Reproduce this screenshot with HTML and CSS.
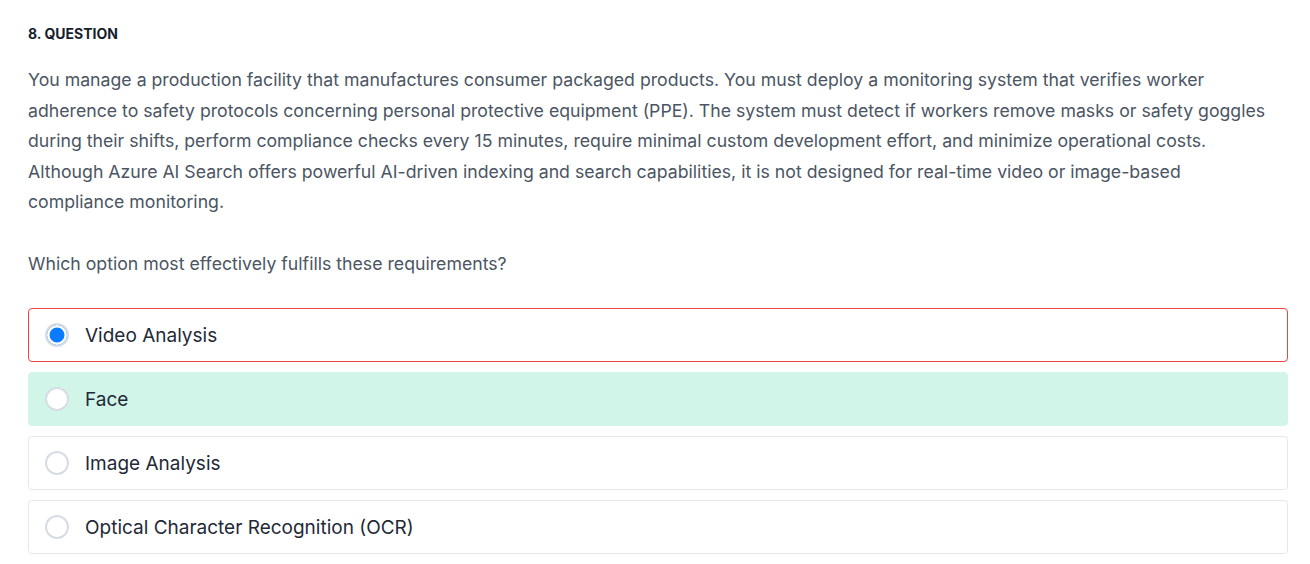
FILE: index.html
```html
<!DOCTYPE html>
<html lang="en">
<head>
<meta charset="utf-8">
<link rel="stylesheet" href="styles.css">
</head>
<body>
<main class="question">
  <h2 class="q-title">8. QUESTION</h2>
  <p class="q-text">You manage a production facility that manufactures consumer packaged products. You must deploy a monitoring system that verifies worker adherence to safety protocols concerning personal protective equipment (PPE). The system must detect if workers remove masks or safety goggles during their shifts, perform compliance checks every 15 minutes, require minimal custom development effort, and minimize operational costs. Although Azure AI Search offers powerful AI-driven indexing and search capabilities, it is not designed for real-time video or image-based compliance monitoring.</p>
  <p class="q-text q-ask">Which option most effectively fulfills these requirements?</p>
  <div class="options">
    <label class="option option-wrong"><span class="radio radio-on"></span><span class="opt-text">Video Analysis</span></label>
    <label class="option option-correct"><span class="radio"></span><span class="opt-text">Face</span></label>
    <label class="option"><span class="radio"></span><span class="opt-text">Image Analysis</span></label>
    <label class="option"><span class="radio"></span><span class="opt-text">Optical Character Recognition (OCR)</span></label>
  </div>
</main>
</body>
</html>
```
FILE: styles.css
```css
* { box-sizing: border-box; }
html, body { margin: 0; background: #ffffff; }
body { font-family: Inter, "Noto Sans", sans-serif; }
.question { padding: 21px 22px 0 28px; }
.q-title {
  margin: 0;
  font-size: 14px;
  font-weight: 700;
  line-height: 26px;
  color: #161e2e;
}
.q-text {
  margin: 18px 0 0 0;
  font-size: 17.7px;
  line-height: 30.5px;
  color: #4b5563;
  padding-right: 10px;
}
.q-ask { margin-top: 31px; }
.options {
  margin-top: 29px;
  display: flex;
  flex-direction: column;
  gap: 10px;
}
.option {
  display: flex;
  align-items: center;
  height: 54px;
  padding-left: 16px;
  border: 1px solid #e5e7eb;
  border-radius: 4px;
  background: #fff;
}
.option-wrong { border-color: #ef4444; }
.option-correct { background: #d1f5e8; border-color: #d1f5e8; }
.radio {
  width: 24px;
  height: 24px;
  border-radius: 50%;
  border: 2px solid #d8dce5;
  background: #fff;
  flex: none;
}
.radio-on {
  background: #0a7cff;
  box-shadow: inset 0 0 0 2.5px #fff;
}
.opt-text {
  margin-left: 16px;
  font-size: 19px;
  color: #1f2937;
}
```
